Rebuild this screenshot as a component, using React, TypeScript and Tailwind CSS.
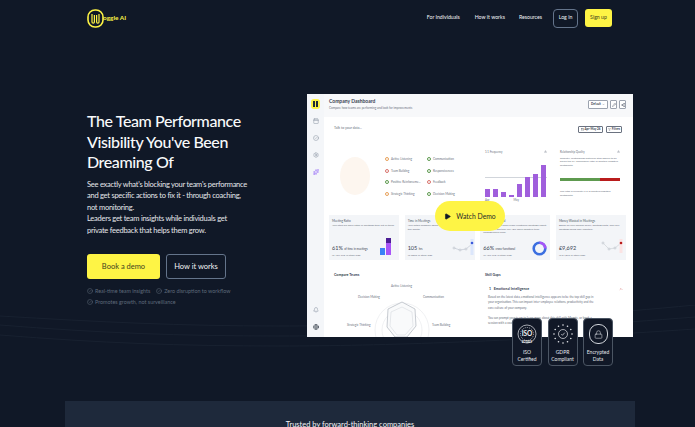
import { Bell, Calendar, CircleCheck, Download, Filter, Lock, Pencil, Play, Settings, Share2, Sparkles, ChevronDown, Globe, ChevronUp } from "lucide-react";

const NAV = ["For Individuals", "How it works", "Resources"];

const SKILLS = [
  { name: "Active Listening", color: "#e8a15b" },
  { name: "Communication", color: "#5e9a4f" },
  { name: "Team Building", color: "#d9736d" },
  { name: "Responsiveness", color: "#5e9a4f" },
  { name: "Positive Reinforceme...", color: "#5e9a4f" },
  { name: "Feedback", color: "#d9736d" },
  { name: "Strategic Thinking", color: "#e8a15b" },
  { name: "Decision Making", color: "#5e9a4f" },
];

const BARS = [8, 8, 5, 2, 13, 20, 23, 32];

const CARDS = [
  { title: "Meeting Ratio", desc: "Your staff are more often in meetings than out of them.", stat: "61%", unit: "of time in meetings", sub: "vs 45% avg. in other orgs" },
  { title: "Time in Meetings", desc: "Your entire company spent this many hours in meetings this month.", stat: "105", unit: "hrs", sub: "vs 78hrs in other orgs" },
  { title: "Cross-Functional", desc: "Teams that meet more cross-functional meetings report lower silos, and they are 18% more effective than homogeneous ones.", stat: "66%", unit: "cross-functional", sub: "vs 45% avg. in other orgs" },
  { title: "Money Wasted in Meetings", desc: "Based on your median salary, meeting costs, and your meetings being 68% effective.", stat: "£9,692", unit: "", sub: "vs £4,822 in other orgs" },
];

const RADAR_LABELS = [
  { name: "Active Listening", cls: "left-[67px] top-[24px]" },
  { name: "Communication", cls: "left-[99px] top-[35px]" },
  { name: "Decision Making", cls: "left-[34px] top-[35px]" },
  { name: "Strategic Thinking", cls: "left-[23px] top-[63px]" },
  { name: "Team Building", cls: "left-[108px] top-[63px]" },
];

function Logo() {
  return (
    <svg width="17" height="19" viewBox="0 0 17 19" fill="none" stroke="#fef445">
      <rect x="1" y="1" width="15" height="17" rx="7" strokeWidth="1.6" />
      <path d="M5 5v8a1.2 1.2 0 0 0 2.4 0V6M9.6 6v7a1.2 1.2 0 0 0 2.4 0V5" strokeWidth="1.2" />
    </svg>
  );
}

function CardChart({ i }: { i: number }) {
  if (i === 0) {
    return (
      <div className="absolute right-[8px] bottom-[5px] flex items-end gap-[1px]">
        <div className="w-[5px] h-[7px] bg-[#3b82f6]" />
        <div className="w-[5px] h-[17px] bg-gradient-to-b from-[#4c1d95] from-30% to-[#a855f7] to-30%" />
      </div>
    );
  }
  if (i === 1) {
    return (
      <svg className="absolute right-[1px] bottom-[3px]" width="22" height="20" viewBox="0 0 22 20" fill="none">
        <path d="M2 11l6 2 6-1 6-5" stroke="#b8c0cc" strokeWidth="0.6" />
        <circle cx="2" cy="11" r="1" stroke="#a0a8b4" strokeWidth="0.5" fill="#fff" />
        <circle cx="8" cy="13" r="1" stroke="#a0a8b4" strokeWidth="0.5" fill="#fff" />
        <circle cx="14" cy="12" r="1" stroke="#a0a8b4" strokeWidth="0.5" fill="#fff" />
        <rect x="18.5" y="2" width="3" height="16" fill="#dbe6fb" />
        <circle cx="20" cy="6" r="1.3" fill="#3b5bdb" />
      </svg>
    );
  }
  if (i === 2) {
    return (
      <svg className="absolute right-[3px] bottom-[4px]" width="15" height="15" viewBox="0 0 15 15" fill="none" strokeWidth="2.6">
        <circle cx="7.5" cy="7.5" r="5.8" stroke="#3b6fe0" />
        <path d="M7.5 1.7a5.8 5.8 0 0 1 5.8 5.8" stroke="#a855f7" />
      </svg>
    );
  }
  return (
    <svg className="absolute right-[3px] bottom-[3px]" width="22" height="20" viewBox="0 0 22 20" fill="none">
      <path d="M2 6l6 6 6-1 6-5" stroke="#c8ccd2" strokeWidth="0.6" />
      <circle cx="2" cy="6" r="1" stroke="#a0a8b4" strokeWidth="0.5" fill="#fff" />
      <circle cx="8" cy="12" r="1" stroke="#a0a8b4" strokeWidth="0.5" fill="#fff" />
      <circle cx="14" cy="11" r="1" stroke="#a0a8b4" strokeWidth="0.5" fill="#fff" />
      <rect x="18.5" y="2" width="3" height="14" fill="#fbe3e3" />
      <circle cx="20" cy="6" r="1.3" fill="#b91c1c" />
    </svg>
  );
}

function Dashboard() {
  return (
    <div className="w-[326px] h-[243px] shrink-0 bg-white flex overflow-hidden text-[#4b5563]">
      <aside className="w-[17px] shrink-0 bg-[#f4f6f9] flex flex-col items-center pt-[5px] pb-[7px]">
        <div className="w-[9px] h-[10px] rounded-[3px] bg-[#fef445] flex items-center justify-center gap-[1px]">
          <div className="w-[2px] h-[6px] bg-[#1f2937]" />
          <div className="w-[2px] h-[6px] bg-[#1f2937]" />
        </div>
        <div className="flex flex-col gap-[11px] mt-[9px] text-[#8a94a3]">
          <Calendar size={6} />
          <CircleCheck size={6} />
          <Settings size={6} />
          <Sparkles size={6} className="text-[#8b5cf6]" />
        </div>
        <div className="mt-auto flex flex-col gap-[11px]">
          <Bell size={6} className="text-[#8a94a3]" />
          <Globe size={6} className="text-[#1f2937]" />
        </div>
      </aside>
      <div className="flex-1 min-w-0 flex flex-col">
        <header className="h-[23px] shrink-0 bg-[#f7f8fa] flex items-start justify-between pl-[5px] pr-[7px] pt-[4px]">
          <div>
            <div className="text-[5px] leading-[7px] font-bold text-[#374151]">Company Dashboard</div>
            <div className="text-[3px] leading-[6px] text-[#6b7280]">Compare how teams are performing and look for improvements</div>
          </div>
          <div className="flex items-center gap-[2px] text-[#374151] mt-[2px]">
            <div className="h-[9px] w-[20px] border-[0.5px] border-[#9ca3af] rounded-[1px] bg-white flex items-center justify-center gap-[1px] text-[3px] font-bold">
              Default <ChevronDown size={3} />
            </div>
            <div className="h-[9px] w-[7px] border-[0.5px] border-[#9ca3af] rounded-[1px] bg-white flex items-center justify-center"><Pencil size={4} /></div>
            <div className="h-[9px] w-[7px] border-[0.5px] border-[#9ca3af] rounded-[1px] bg-white flex items-center justify-center"><Share2 size={4} /></div>
          </div>
        </header>

        <div className="h-[98px] shrink-0 flex">
          <div className="w-[161px] shrink-0 pl-[10px] pt-[9px]">
            <div className="text-[3.5px] leading-[5px] text-[#6b7280]">Talk to your data...</div>
            <div className="flex items-start mt-[26px]">
              <div className="w-[30px] h-[38px] rounded-[50%] bg-[#fdf6ef] ml-[6px]" />
              <div className="grid grid-cols-[42px_42px] gap-y-[7.6px] ml-[15px] w-[84px]">
                {SKILLS.map((s) => (
                  <div key={s.name} className="flex items-center gap-[2px] text-[3px] leading-[4px] whitespace-nowrap text-[#6b7280]">
                    <span className="w-[4px] h-[4px] rounded-full border" style={{ borderColor: s.color }} />
                    {s.name}
                  </div>
                ))}
              </div>
            </div>
          </div>

          <div className="w-[75px] shrink-0 pt-[33px]">
            <div className="text-[2.8px] leading-[4px] text-[#6b7280] flex justify-between w-[62px]">1:1 Frequency <Download size={3} /></div>
            <div className="relative h-[32px] mt-[11px] flex items-end gap-[3px] w-[62px]">
              <div className="absolute left-0 right-0 top-[12px] h-[0.5px] bg-[#d1d5db]" />
              {BARS.map((h, i) => (
                <div key={i} className="w-[5px] bg-[#a05fdc] relative" style={{ height: h }} />
              ))}
            </div>
            <div className="flex gap-[24px] text-[2.8px] leading-[5px] mt-[1px] text-[#6b7280]"><span>Apr</span><span>May</span></div>
          </div>

          <div className="flex-1 min-w-0 pt-[31px] relative">
            <div className="absolute right-[11px] top-[9px] flex gap-[3px] text-[#374151]">
              <div className="h-[7px] w-[25px] border-[0.5px] border-[#6b7280] rounded-[1px] flex items-center justify-center gap-[1px] text-[3px] font-bold whitespace-nowrap"><Calendar size={3} /> Apr-May 26</div>
              <div className="h-[7px] w-[16px] border-[0.5px] border-[#6b7280] rounded-[1px] flex items-center justify-center gap-[1px] text-[3px] font-bold"><Filter size={3} /> Filters</div>
            </div>
            <div className="w-[60px] text-[2.8px] leading-[4px] text-[#6b7280] flex justify-between mt-[2px]">Relationship Quality <Download size={3} /></div>
            <div className="w-[60px] text-[2.6px] leading-[3.4px] text-[#6b7280] mt-[3px]">Recently, relationships between staff appear to be below the 3:1 benchmark ratio of positive-negative sentiments.</div>
            <div className="w-[60px] h-[3px] flex mt-[11px]">
              <div className="w-[40px] bg-[#5e9a4f]" />
              <div className="flex-1 bg-[#b91c1c]" />
            </div>
            <div className="w-[60px] text-[2.6px] leading-[3.6px] text-[#6b7280] mt-[9px]">The ratio is currently 2.5 of positive:negative sentiments.</div>
          </div>
        </div>

        <div className="grid grid-cols-4 gap-[5.5px] pl-[5px] pr-[7px]">
          {CARDS.map((c, i) => (
            <div key={c.title} className="relative h-[45px] bg-[#f3f5f8] px-[3px] pt-[4px]">
              <div className="text-[3px] leading-[4px] text-[#4b5563]">{c.title}</div>
              <div className="text-[2.6px] leading-[3.5px] mt-[1px] text-[#6b7280] w-[64px]">{c.desc}</div>
              <div className="absolute left-[3px] bottom-[3px]">
                <div className="leading-[6px] text-[5.5px] text-[#374151]">{c.stat} <span className="text-[2.8px]">{c.unit}</span></div>
                <div className="text-[2.6px] leading-[4px] mt-[1px] text-[#6b7280]">{c.sub}</div>
              </div>
              <CardChart i={i} />
            </div>
          ))}
        </div>

        <div className="flex-1 min-h-0 flex">
          <div className="relative w-[161px] shrink-0 pl-[10px] pt-[12px]">
            <div className="text-[3.6px] leading-[6px] font-bold text-[#374151]">Compare Teams</div>
            {RADAR_LABELS.map((l) => (
              <span key={l.name} className={`absolute text-[3px] leading-[4px] whitespace-nowrap text-[#6b7280] ${l.cls}`}>{l.name}</span>
            ))}
            <svg className="absolute left-[47px] top-[37px]" width="60" height="60" viewBox="0 0 60 60" fill="none">
              <circle cx="31" cy="33" r="27" stroke="#e5e7eb" strokeWidth="0.6" />
              <circle cx="31" cy="33" r="20" stroke="#e5e7eb" strokeWidth="0.6" />
              <path d="M31 5l13 7 1 17-9 11H24l-8-10 1-18z" fill="#f9fafb" stroke="#a3a9b3" strokeWidth="0.6" />
              <path d="M31 10l10 5 1 14-8 9H26l-7-9 1-14z" stroke="#d1d5db" strokeWidth="0.5" />
            </svg>
          </div>
          <div className="flex-1 min-w-0 pt-[12px]">
            <div className="text-[3.6px] leading-[6px] font-bold text-[#374151]">Skill Gaps</div>
            <div className="flex justify-between items-center mt-[8px] pl-[4px] pr-[10px] text-[3.6px] leading-[6px] font-bold text-[#374151]">
              <span>1 &nbsp; Emotional Intelligence</span>
              <ChevronUp size={4} className="text-[#b91c1c]" />
            </div>
            <div className="w-[106px] ml-[3px] text-[3px] leading-[5.3px] mt-[3px] text-[#6b7280]">
              Based on the latest data, emotional intelligence appears to be the top skill gap in your organisation. This can impact inter-employee relations, productivity and the core culture of your company.
            </div>
            <div className="w-[106px] ml-[3px] text-[3px] leading-[5.3px] mt-[5px] text-[#6b7280]">
              You can prompt your team to learn more about this skill with Moggie, or book a session with a coach.
            </div>
          </div>
        </div>
      </div>
    </div>
  );
}

function IsoMark() {
  return (
    <svg width="20" height="20" viewBox="0 0 20 20" fill="none" stroke="#e5e7eb" strokeWidth="0.7">
      <circle cx="10" cy="10" r="9" />
      <circle cx="10" cy="10" r="6.5" strokeDasharray="1 1" />
      <text x="10" y="12" textAnchor="middle" fill="#f3f4f6" stroke="none" fontSize="6.5" fontWeight="700">ISO</text>
      <text x="10" y="19" textAnchor="middle" fill="#f3f4f6" stroke="none" fontSize="3.6" fontWeight="700">27001</text>
    </svg>
  );
}

function GdprMark() {
  const dots = Array.from({ length: 12 }, (_, i) => {
    const a = (i / 12) * Math.PI * 2;
    return { x: 10 + 9 * Math.cos(a), y: 10 + 9 * Math.sin(a) };
  });
  return (
    <svg width="20" height="20" viewBox="0 0 20 20" fill="none" stroke="#e5e7eb" strokeWidth="0.7">
      {dots.map((d, i) => (
        <circle key={i} cx={d.x} cy={d.y} r="0.8" fill="#e5e7eb" stroke="none" />
      ))}
      <circle cx="10" cy="10" r="4.5" />
      <path d="M8.3 10l1.2 1.3 2.2-2.6" />
    </svg>
  );
}

function LockMark() {
  return (
    <div className="w-[19px] h-[20px] rounded-[9px] border-[0.7px] border-[#d1d5db] flex items-center justify-center">
      <Lock size={9} strokeWidth={1.4} className="text-[#e5e7eb]" />
    </div>
  );
}

function Badge({ lines, children }: { lines: string[]; children: React.ReactNode }) {
  return (
    <div className="w-[30px] h-[48px] rounded-[4px] bg-[#111827] border border-[#4b5563] flex flex-col items-center pt-[5px]">
      {children}
      <div className="text-[5px] leading-[6.5px] text-center text-[#e5e7eb] mt-[5px]">
        {lines.map((l) => <div key={l}>{l}</div>)}
      </div>
    </div>
  );
}

export default function App() {
  return (
    <div className="relative h-[427px] w-[695px] overflow-hidden bg-[#101827] text-white font-['Lato',sans-serif]">
      <svg className="absolute left-0 top-[305px]" width="695" height="50" viewBox="0 0 695 50" fill="none" stroke="#182130">
        <path d="M0 11C100 17 180 21 280 21S520 17 695 0" />
        <path d="M0 20C100 28 180 31 280 31S520 26 695 12" />
        <path d="M0 30C100 38 180 41 280 41S520 36 695 24" />
      </svg>

      <nav className="relative h-[36px] flex items-center pl-[87px] pr-[83px]">
        <div className="flex items-center text-[#fef445]">
          <Logo />
          <span className="text-[6.4px] font-bold -ml-[1px]">oggle AI</span>
        </div>
        <div className="ml-auto flex items-center text-[5.2px] text-[#f3f4f6]">
          <a className="mr-[15px]">{NAV[0]}</a>
          <a className="mr-[14px]">{NAV[1]}</a>
          <a className="mr-[11px]">{NAV[2]}</a>
          <button className="h-[19px] w-[25px] border border-[#64748b] rounded-[4px] mr-[7px]">Log in</button>
          <button className="h-[18px] w-[27px] bg-[#fef445] text-[#3f3f1f] rounded-[3px]">Sign up</button>
        </div>
      </nav>

      <section className="relative flex pl-[87px] pt-[58px]">
        <div className="w-[220px] shrink-0 pt-[17px]">
          <h1 className="text-[16px] leading-[20.5px] tracking-[-0.4px] font-medium text-[#f9fafb]">The Team Performance<br />Visibility You've Been<br />Dreaming Of</h1>
          <p className="mt-[6px] text-[7.5px] leading-[11.5px] tracking-[-0.25px] whitespace-nowrap text-[#e5e7eb]">
            See exactly what's blocking your team's performance<br />
            and get specific actions to fix it - through coaching,<br />
            not monitoring.<br />
            Leaders get team insights while individuals get<br />
            private feedback that helps them grow.
          </p>
          <div className="flex gap-[6px] mt-[18px]">
            <button className="w-[73px] h-[25px] rounded-[3px] bg-[#fef445] text-[#3f3f1f] text-[7.5px]">Book a demo</button>
            <button className="w-[60px] h-[25px] rounded-[3px] border border-[#64748b] text-[7.5px] text-[#f3f4f6]">How it works</button>
          </div>
          <div className="mt-[8px] flex flex-wrap w-[150px] gap-x-[6px] gap-y-[3px] text-[5.4px] leading-[8px] text-[#5f6a7a]">
            <span className="flex items-center gap-[2px]"><CircleCheck size={6} />Real-time team insights</span>
            <span className="flex items-center gap-[2px]"><CircleCheck size={6} />Zero disruption to workflow</span>
            <span className="flex items-center gap-[2px]"><CircleCheck size={6} />Promotes growth, not surveillance</span>
          </div>
        </div>
        <Dashboard />
        <div className="absolute left-[435px] top-[165px] w-[70px] h-[30px] rounded-full bg-[#fef445] flex items-center justify-center gap-[5px] text-[#27272a] text-[6.8px]">
          <Play size={7} fill="#111827" className="text-[#111827]" />
          Watch Demo
        </div>
        <div className="absolute left-[512px] top-[282px] flex gap-[5.5px]">
          <Badge lines={["ISO", "Certified"]}><IsoMark /></Badge>
          <Badge lines={["GDPR", "Compliant"]}><GdprMark /></Badge>
          <Badge lines={["Encrypted", "Data"]}><LockMark /></Badge>
        </div>
      </section>

      <section className="relative mt-[64px] mx-[65px] w-[570px] h-[60px] bg-[#1e293b] pt-[18px] text-center text-[7.5px] leading-[11px] text-[#f3f4f6]">
        Trusted by forward-thinking companies
      </section>
    </div>
  );
}
